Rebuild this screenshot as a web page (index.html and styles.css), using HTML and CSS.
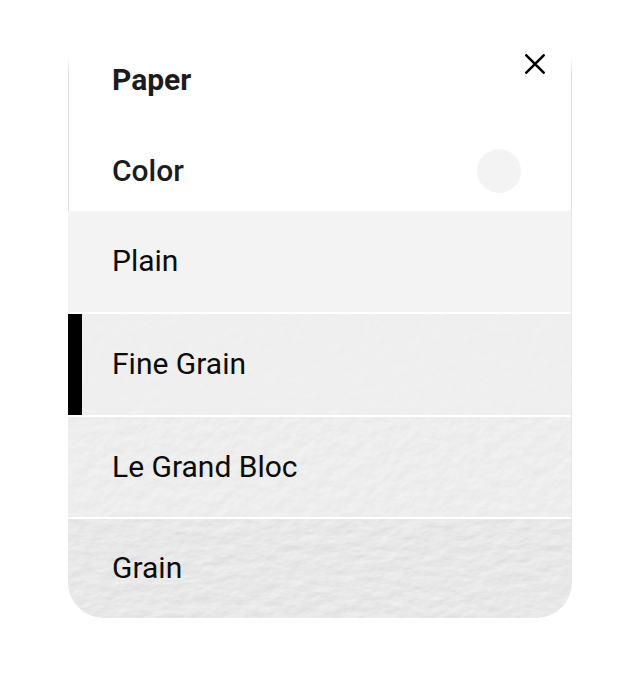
FILE: index.html
```
<!DOCTYPE html>
<html lang="en">
<head>
    <meta charset="UTF-8">
    <meta name="viewport" content="width=device-width, initial-scale=1.0">
    <title>Paper</title>
    <link rel="stylesheet" href="styles.css">
</head>
<body>
    <!-- Paper texture filters -->
    <svg class="filters" width="0" height="0" aria-hidden="true">
        <filter id="fine-texture" x="0" y="0" width="100%" height="100%" color-interpolation-filters="sRGB">
            <feTurbulence type="fractalNoise" baseFrequency="0.09" numOctaves="3" seed="4" />
            <feDiffuseLighting surfaceScale="0.05" diffuseConstant="1.083" lighting-color="#fff">
                <feDistantLight azimuth="240" elevation="60" />
            </feDiffuseLighting>
        </filter>
        <filter id="bloc-texture" x="0" y="0" width="100%" height="100%" color-interpolation-filters="sRGB">
            <feTurbulence type="fractalNoise" baseFrequency="0.08 0.09" numOctaves="4" seed="12" />
            <feDiffuseLighting surfaceScale="0.16" diffuseConstant="1.075" lighting-color="#fff">
                <feDistantLight azimuth="240" elevation="60" />
            </feDiffuseLighting>
        </filter>
        <filter id="grain-texture" x="0" y="0" width="100%" height="100%" color-interpolation-filters="sRGB">
            <feTurbulence type="fractalNoise" baseFrequency="0.05 0.1" numOctaves="4" seed="7" />
            <feDiffuseLighting surfaceScale="0.28" diffuseConstant="1.05" lighting-color="#fff">
                <feDistantLight azimuth="240" elevation="60" />
            </feDiffuseLighting>
        </filter>
    </svg>

    <form class="panel">
        <div class="panel-top">
            <div class="panel-header">
                <h1>Paper</h1>
                <button type="button" class="close" aria-label="Close">
                    <svg width="20" height="20" viewBox="0 0 20 20" aria-hidden="true">
                        <path d="M1.3 1.3L18.7 18.7M18.7 1.3L1.3 18.7" fill="none" stroke="#000" stroke-width="2.5" stroke-linecap="round" />
                    </svg>
                </button>
            </div>
            <div class="color-row">
                <label for="paperColor">Color</label>
                <input type="color" id="paperColor" value="#f3f3f3">
            </div>
        </div>

        <div class="papers">
            <div class="paper">
                <input type="radio" name="paper" id="plain">
                <label for="plain">Plain</label>
            </div>
            <div class="paper fine">
                <input type="radio" name="paper" id="fine" checked>
                <label for="fine">Fine Grain</label>
            </div>
            <div class="paper bloc">
                <input type="radio" name="paper" id="bloc">
                <label for="bloc">Le Grand Bloc</label>
            </div>
            <div class="paper grain">
                <input type="radio" name="paper" id="grain">
                <label for="grain">Grain</label>
            </div>
        </div>
    </form>
</body>
</html>
```
FILE: styles.css
```
* {
    margin: 0;
    padding: 0;
    box-sizing: border-box;
}

body {
    font-family: Roboto, Arial, sans-serif;
    font-size: 30px;
    line-height: 36px;
    color: #0c0c0c;
    background-color: #fff;
    padding: 50px 68px;
}

.filters {
    position: absolute;
}

.panel {
    border-radius: 0 0 36px 36px;
    overflow: hidden;
}

/* side lines fade in from the top */
.panel-top {
    background:
        linear-gradient(transparent 6px, #dedede 24px) left / 1px 100% no-repeat,
        linear-gradient(transparent 6px, #dedede 24px) right / 1px 100% no-repeat;
}

.panel-header {
    display: flex;
    justify-content: space-between;
    align-items: flex-start;
    padding: 0 23px 0 44px;
}

h1 {
    font-size: 30px;
    font-weight: bold;
    color: #1c1c1c;
    margin-top: 12px;
    margin-bottom: 33px;
}

.close {
    display: flex;
    padding: 4px;
    border: none;
    background: none;
    cursor: pointer;
}

.color-row {
    display: flex;
    justify-content: space-between;
    align-items: center;
    height: 80px;
    padding: 0 51px 0 44px;
    font-weight: 500;
    color: #1c1c1c;
}

input[type="color"] {
    appearance: none;
    width: 44px;
    height: 44px;
    border: none;
    border-radius: 50%;
    overflow: hidden;
    background: #f3f3f3;
    cursor: pointer;
}

input[type="color"]::-webkit-color-swatch-wrapper {
    padding: 0;
}

input[type="color"]::-webkit-color-swatch {
    border: none;
}

.papers {
    display: grid;
    gap: 2px;
    border-right: 1px solid #e6e6e6;
}

.paper {
    position: relative;
    display: flex;
    height: 101px;
    background-color: #f3f3f3;
}

.paper.bloc {
    height: 100px;
}

.paper.grain {
    height: 99px;
}

.paper::before {
    content: "";
    position: absolute;
    inset: 0;
}

.fine::before {
    background-color: #eee;
    filter: url(#fine-texture);
}

.bloc::before {
    background-color: #ebebeb;
    filter: url(#bloc-texture);
}

.grain::before {
    background-color: #e6e6e6;
    filter: url(#grain-texture);
}

.paper input {
    appearance: none;
    position: relative;
    width: 14px;
    cursor: pointer;
}

.paper input:checked {
    background-color: #000;
}

.paper label {
    position: relative;
    flex: 1;
    display: flex;
    align-items: center;
    padding-left: 30px;
    padding-bottom: 1px;
    cursor: pointer;
}
```
